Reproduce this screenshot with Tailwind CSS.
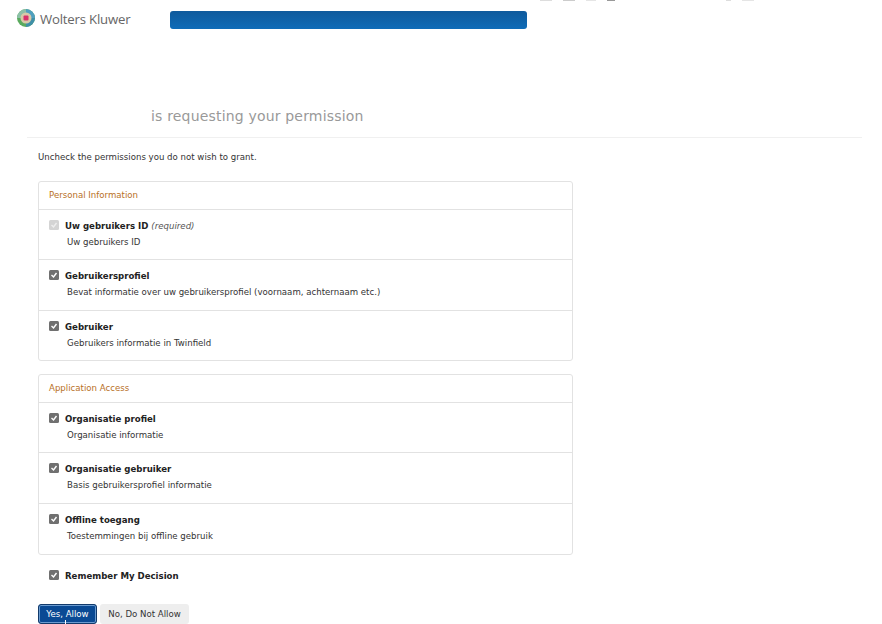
<!DOCTYPE html>
<html lang="en">
<head>
    <meta charset="UTF-8">
    <title>Permission request</title>
    <script src="https://cdn.jsdelivr.net/npm/@tailwindcss/browser@4"></script>
</head>
<body class="relative bg-white h-[624px] overflow-hidden font-['DejaVu_Sans',sans-serif] text-[8.6px] text-[#333]">

    <!-- cut off text at the very top of the capture -->
    <div class="absolute top-0 left-[540px] w-[222px] h-[1px] flex gap-[11px]">
        <span class="w-[12px] bg-[#dddddd]"></span>
        <span class="w-[12px] bg-[#cccccc]"></span>
        <span class="w-[10px] bg-[#e5e5e5]"></span>
        <span class="w-[8px] bg-[#999999]"></span>
        <span class="w-[5px] ml-[100px] bg-[#dddddd]"></span>
        <span class="w-[12px] bg-[#e5e5e5]"></span>
    </div>

    <!-- HEADER -->
    <header class="h-[100px] flex items-start pl-[17px] pt-[9px]">
        <svg class="w-[18px] h-[18px] shrink-0" viewBox="0 0 18 18">
            <circle cx="9" cy="9" r="9" fill="#5aaa5e"/>
            <path d="M9 0a9 9 0 0 1 9 9H13a4 4 0 0 0-4-4z" fill="#4f9fc0"/>
            <path d="M0 9a9 9 0 0 1 9-9v5a4 4 0 0 0-4 4z" fill="#8cc0a8"/>
            <path d="M9 18a9 9 0 0 0 9-9H13a4 4 0 0 1-4 4z" fill="#3f8fa8"/>
            <circle cx="9" cy="9" r="5.5" fill="#d8c9a8"/>
            <rect x="6.5" y="6.5" width="5" height="5" rx="1" fill="#d8316b"/>
        </svg>
        <span class="ml-[5px] w-[130px] font-['Open_Sans',sans-serif] text-[13.2px] leading-[20px] text-[#666] tracking-[-0.2px]">Wolters Kluwer</span>
        <div class="mt-[2px] w-[357px] h-[18px] rounded-[3px] bg-gradient-to-b from-[#0f5a9c] to-[#0f6cb8]"></div>
    </header>

    <!-- TITLE -->
    <div class="ml-[27px] mr-[20px] h-[38px] border-b border-[#f0f0f0] pl-[124px]">
        <h1 class="text-[14px] leading-[32px] text-[#999] tracking-[0.18px]">is requesting your permission</h1>
    </div>

    <main class="pl-[38px] w-[573px]">
        <p class="mt-[13px] leading-[12px]">Uncheck the permissions you do not wish to grant.</p>

        <!-- PERSONAL INFORMATION -->
        <section class="mt-[18px] border border-[#e2e2e2] rounded-[3px]">
            <h2 class="h-[28px] px-[10px] leading-[26px] text-[#b8701f] border-b border-[#e2e2e2]">Personal Information</h2>
            <div class="h-[50px] px-[10px] pt-[10px] border-b border-[#e2e2e2]">
                <div class="flex items-start h-[12px] leading-[12px]">
                    <svg class="w-[10px] h-[10px] mr-[6px]" viewBox="0 0 10 10"><rect width="10" height="10" rx="1.5" fill="#d4d4d4"/><path d="M2.5 5l2 2 3-4" fill="none" stroke="#eeeeee" stroke-width="1.4"/></svg>
                    <b class="text-[#222]">Uw gebruikers ID</b>
                    <i class="ml-[3px] text-[#555]">(required)</i>
                </div>
                <p class="mt-[4px] ml-[18px] leading-[12px]">Uw gebruikers ID</p>
            </div>
            <div class="h-[51px] px-[10px] pt-[10px] border-b border-[#e2e2e2]">
                <div class="flex items-start h-[12px] leading-[12px]">
                    <svg class="w-[10px] h-[10px] mr-[6px]" viewBox="0 0 10 10"><rect width="10" height="10" rx="1.5" fill="#707070"/><path d="M2.5 5l2 2 3-4" fill="none" stroke="#ffffff" stroke-width="1.4"/></svg>
                    <b class="text-[#222]">Gebruikersprofiel</b>
                </div>
                <p class="mt-[4px] ml-[18px] leading-[12px]">Bevat informatie over uw gebruikersprofiel (voornaam, achternaam etc.)</p>
            </div>
            <div class="h-[49px] px-[10px] pt-[10px]">
                <div class="flex items-start h-[12px] leading-[12px]">
                    <svg class="w-[10px] h-[10px] mr-[6px]" viewBox="0 0 10 10"><rect width="10" height="10" rx="1.5" fill="#707070"/><path d="M2.5 5l2 2 3-4" fill="none" stroke="#ffffff" stroke-width="1.4"/></svg>
                    <b class="text-[#222]">Gebruiker</b>
                </div>
                <p class="mt-[4px] ml-[18px] leading-[12px]">Gebruikers informatie in Twinfield</p>
            </div>
        </section>

        <!-- APPLICATION ACCESS -->
        <section class="mt-[13px] border border-[#e2e2e2] rounded-[3px]">
            <h2 class="h-[28px] px-[10px] leading-[26px] text-[#b8701f] border-b border-[#e2e2e2]">Application Access</h2>
            <div class="h-[50px] px-[10px] pt-[10px] border-b border-[#e2e2e2]">
                <div class="flex items-start h-[12px] leading-[12px]">
                    <svg class="w-[10px] h-[10px] mr-[6px]" viewBox="0 0 10 10"><rect width="10" height="10" rx="1.5" fill="#707070"/><path d="M2.5 5l2 2 3-4" fill="none" stroke="#ffffff" stroke-width="1.4"/></svg>
                    <b class="text-[#222]">Organisatie profiel</b>
                </div>
                <p class="mt-[4px] ml-[18px] leading-[12px]">Organisatie informatie</p>
            </div>
            <div class="h-[51px] px-[10px] pt-[10px] border-b border-[#e2e2e2]">
                <div class="flex items-start h-[12px] leading-[12px]">
                    <svg class="w-[10px] h-[10px] mr-[6px]" viewBox="0 0 10 10"><rect width="10" height="10" rx="1.5" fill="#707070"/><path d="M2.5 5l2 2 3-4" fill="none" stroke="#ffffff" stroke-width="1.4"/></svg>
                    <b class="text-[#222]">Organisatie gebruiker</b>
                </div>
                <p class="mt-[4px] ml-[18px] leading-[12px]">Basis gebruikersprofiel informatie</p>
            </div>
            <div class="h-[50px] px-[10px] pt-[10px]">
                <div class="flex items-start h-[12px] leading-[12px]">
                    <svg class="w-[10px] h-[10px] mr-[6px]" viewBox="0 0 10 10"><rect width="10" height="10" rx="1.5" fill="#707070"/><path d="M2.5 5l2 2 3-4" fill="none" stroke="#ffffff" stroke-width="1.4"/></svg>
                    <b class="text-[#222]">Offline toegang</b>
                </div>
                <p class="mt-[4px] ml-[18px] leading-[12px]">Toestemmingen bij offline gebruik</p>
            </div>
        </section>

        <div class="mt-[15px] ml-[11px] flex items-start h-[12px] leading-[12px]">
            <svg class="w-[10px] h-[10px] mr-[6px]" viewBox="0 0 10 10"><rect width="10" height="10" rx="1.5" fill="#707070"/><path d="M2.5 5l2 2 3-4" fill="none" stroke="#ffffff" stroke-width="1.4"/></svg>
            <b class="text-[#222]">Remember My Decision</b>
        </div>

        <div class="mt-[22px] flex gap-[3px]">
            <button class="relative h-[20px] w-[59px] rounded-[3px] bg-[#0a4a94] text-white border border-[#123a6b] shadow-[inset_0_0_0_1px_#6a9bd0]">
                Yes, Allow
                <span class="absolute left-[26px] top-[15px] w-[1px] h-[4px] bg-white"></span>
            </button>
            <button class="h-[20px] w-[89px] rounded-[3px] bg-[#eeeeee] text-[#333]">No, Do Not Allow</button>
        </div>
    </main>

</body>
</html>
